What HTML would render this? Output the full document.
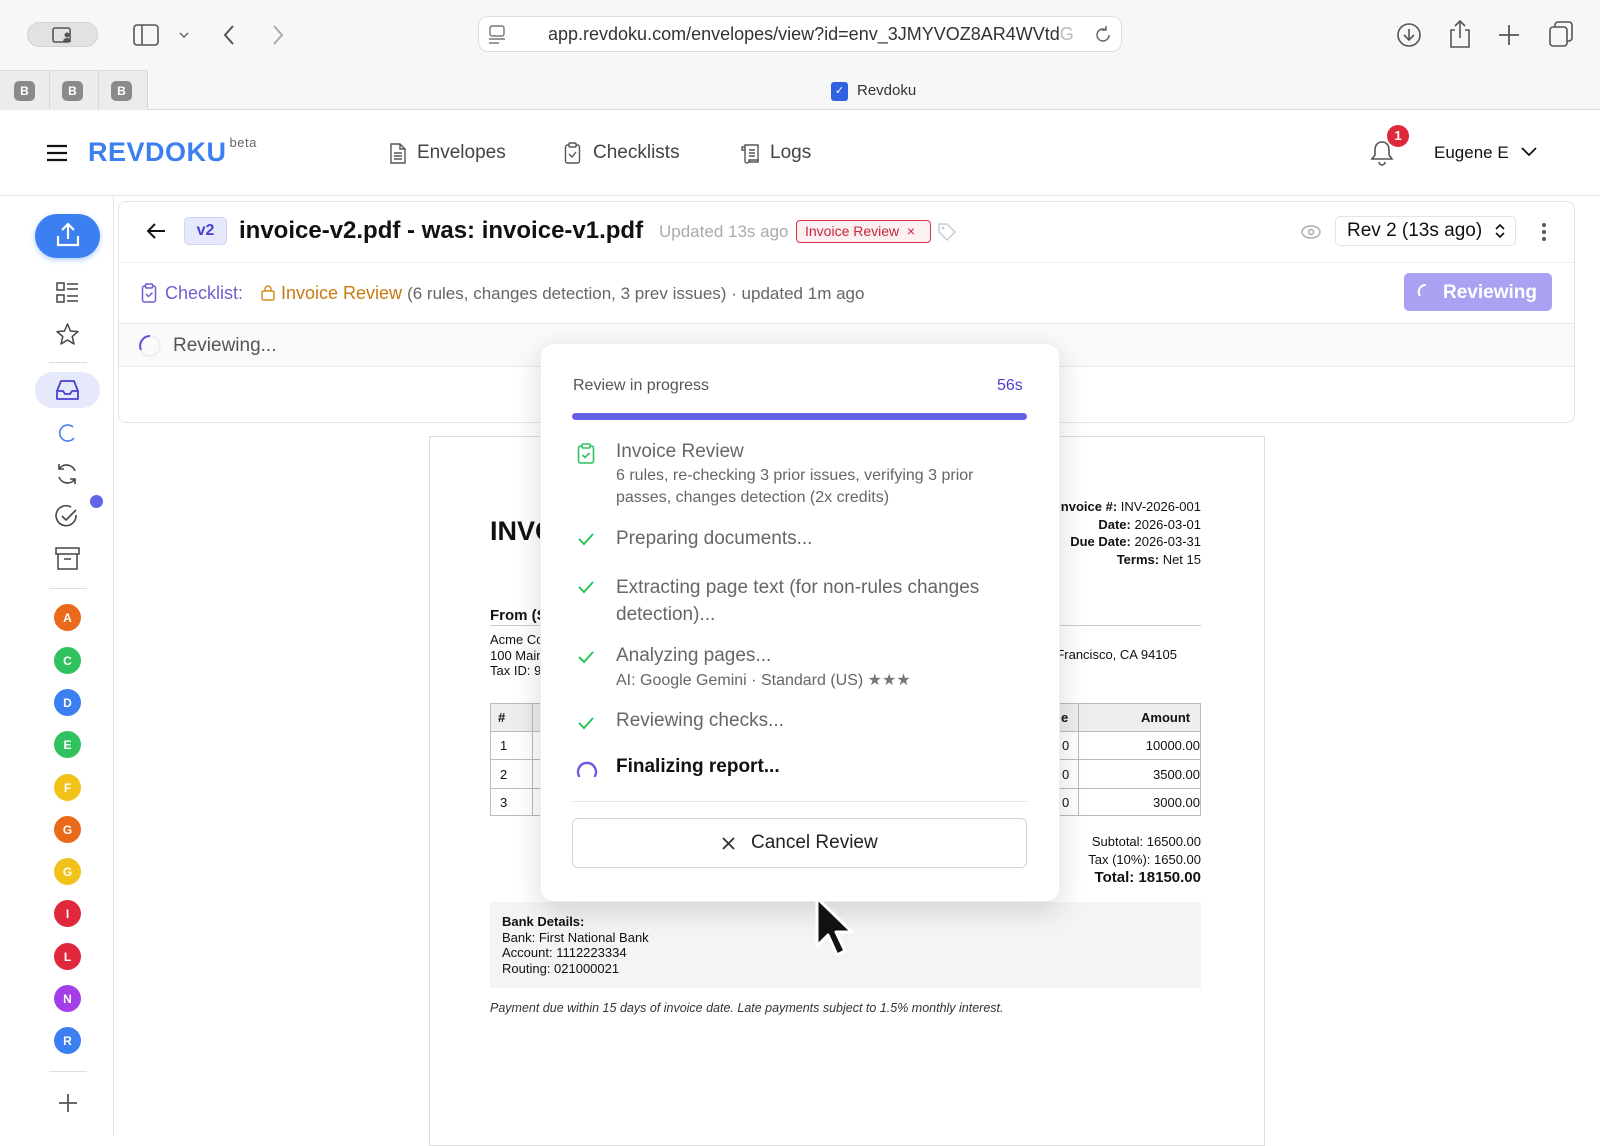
<!DOCTYPE html>
<html><head><meta charset="utf-8"><style>
*{box-sizing:border-box;margin:0;padding:0}
body{width:1600px;height:1136px;overflow:hidden;background:#fff;font-family:"Liberation Sans",sans-serif;position:relative;color:#111}
.a{position:absolute}
.c{transform:translate(-50%,-50%)}
.t{white-space:nowrap}
svg{display:block}
.av{position:absolute;left:54px;width:27px;height:27px;border-radius:50%;color:#fff;font-size:12px;font-weight:bold;display:flex;align-items:center;justify-content:center}
.chk{position:absolute;left:577px}
.r{text-align:right}
</style></head><body>
<!-- browser chrome -->
<div class="a" style="left:0;top:0;width:1600px;height:110px;background:#f7f7f7;border-bottom:1px solid #ddd"></div>
<div class="a" style="left:27px;top:22px;width:71px;height:25px;border-radius:13px;background:#e2e2e2;border:1px solid #d2d2d2"></div>
<svg class="a" style="left:52px;top:27px" width="22" height="16" viewBox="0 0 22 16"><rect x="1" y="1" width="17" height="14" rx="2" fill="none" stroke="#555" stroke-width="1.6"/><circle cx="15" cy="8" r="2.5" fill="#555"/><path d="M11 15c0-3 2-4 4-4s4 1 4 4z" fill="#555"/></svg>
<svg class="a" style="left:133px;top:24px" width="26" height="22" viewBox="0 0 26 22"><rect x="1" y="1" width="24" height="20" rx="3" fill="none" stroke="#555" stroke-width="1.6"/><path d="M9 1v20" stroke="#555" stroke-width="1.6"/></svg>
<svg class="a" style="left:178px;top:31px" width="12" height="8"><path d="M2 2l4 4 4-4" stroke="#666" stroke-width="1.5" fill="none"/></svg>
<svg class="a" style="left:222px;top:24px" width="14" height="22"><path d="M11 2L3 11l8 9" stroke="#555" stroke-width="2" fill="none"/></svg>
<svg class="a" style="left:271px;top:24px" width="14" height="22"><path d="M3 2l8 9-8 9" stroke="#aaa" stroke-width="2" fill="none"/></svg>
<div class="a" style="left:478px;top:16px;width:644px;height:36px;border-radius:10px;background:#fff;border:1px solid #ddd"></div>
<svg class="a" style="left:488px;top:25px" width="18" height="20"><rect x="2" y="1" width="14" height="10" rx="2" fill="none" stroke="#777" stroke-width="1.4"/><path d="M1 14h16M1 18h10" stroke="#777" stroke-width="1.4"/></svg>
<div class="a t" style="left:548px;top:24px;font-size:18px;color:#333">app.revdoku.com/envelopes/view?id=env_3JMYVOZ8AR4WVtd<span style="color:#bbb">G</span></div>
<svg class="a" style="left:1095px;top:25px" width="18" height="20"><path d="M14 10a6 6 0 1 1-3-5.2M11 1v4h-4" stroke="#666" stroke-width="1.5" fill="none"/></svg>
<svg class="a" style="left:1396px;top:22px" width="26" height="26"><circle cx="13" cy="13" r="11" stroke="#555" stroke-width="1.6" fill="none"/><path d="M13 7v11M8 13l5 5 5-5" stroke="#555" stroke-width="1.6" fill="none"/></svg>
<svg class="a" style="left:1449px;top:19px" width="22" height="30"><path d="M6 11H2v17h18V11h-4M11 19V2M6 7l5-5 5 5" stroke="#555" stroke-width="1.6" fill="none"/></svg>
<svg class="a" style="left:1498px;top:24px" width="22" height="22"><path d="M11 1v20M1 11h20" stroke="#555" stroke-width="1.8"/></svg>
<svg class="a" style="left:1548px;top:21px" width="26" height="27"><rect x="7" y="1" width="17" height="19" rx="3" fill="none" stroke="#555" stroke-width="1.6"/><rect x="2" y="6" width="17" height="19" rx="3" fill="#f7f7f7" stroke="#555" stroke-width="1.6"/></svg>
<div class="a" style="left:0;top:70px;width:147px;height:40px;background:#ececec;border-top:1px solid #ddd"></div>
<div class="a" style="left:49px;top:70px;width:1px;height:40px;background:#d8d8d8"></div>
<div class="a" style="left:98px;top:70px;width:1px;height:40px;background:#d8d8d8"></div>
<div class="a" style="left:147px;top:70px;width:1px;height:40px;background:#d8d8d8"></div>
<div class="a" style="left:14px;top:81px;width:21px;height:20px;border-radius:5px;background:#8a8a8a;color:#fff;font-size:12px;font-weight:bold;text-align:center;line-height:20px">B</div>
<div class="a" style="left:62px;top:81px;width:21px;height:20px;border-radius:5px;background:#8a8a8a;color:#fff;font-size:12px;font-weight:bold;text-align:center;line-height:20px">B</div>
<div class="a" style="left:111px;top:81px;width:21px;height:20px;border-radius:5px;background:#8a8a8a;color:#fff;font-size:12px;font-weight:bold;text-align:center;line-height:20px">B</div>
<div class="a" style="left:831px;top:82px;width:17px;height:19px;border-radius:3px;background:#2f62e0;color:#fff;font-size:11px;text-align:center;line-height:19px">✓</div>
<div class="a t" style="left:857px;top:82px;font-size:15px;color:#333">Revdoku</div>

<!-- app header -->
<div class="a" style="left:0;top:195px;width:1600px;height:1px;background:#e5e5e5"></div>
<svg class="a" style="left:46px;top:144px" width="22" height="18"><path d="M1 2h20M1 9h20M1 16h20" stroke="#111" stroke-width="2.2"/></svg>
<div class="a t" style="left:88px;top:137px;font-size:27px;font-weight:bold;color:#3b7ff0;letter-spacing:0.5px">REVDOKU<sup style="font-size:13px;color:#666;font-weight:normal;position:relative;top:-4px;margin-left:3px">beta</sup></div>
<svg class="a" style="left:389px;top:143px" width="17" height="21"><path d="M2 1h9l5 5v14H2z M11 1v5h5 M5 10h8M5 13h8M5 16h8" stroke="#555" stroke-width="1.4" fill="none"/></svg>
<div class="a t" style="left:417px;top:142px;font-size:19px;color:#444">Envelopes</div>
<svg class="a" style="left:564px;top:142px" width="17" height="22"><rect x="1.5" y="3" width="14" height="18" rx="2" stroke="#555" stroke-width="1.4" fill="none"/><rect x="5" y="1" width="7" height="4" rx="1" stroke="#555" stroke-width="1.4" fill="#fff"/><path d="M5 12l3 3 4-5" stroke="#555" stroke-width="1.4" fill="none"/></svg>
<div class="a t" style="left:593px;top:142px;font-size:19px;color:#444">Checklists</div>
<svg class="a" style="left:741px;top:143px" width="20" height="21"><path d="M4 4V2h13v17H7 M4 4H1v3h3 M4 4v14a2 2 0 0 0 4 0v-1H18 M8 7h6M8 10h6M8 13h6" stroke="#555" stroke-width="1.4" fill="none"/></svg>
<div class="a t" style="left:770px;top:142px;font-size:19px;color:#444">Logs</div>
<svg class="a" style="left:1369px;top:139px" width="26" height="28"><path d="M13 3c-5 0-7 4-7 8v5l-3 4h20l-3-4v-5c0-4-2-8-7-8z M10 23a3 3 0 0 0 6 0" stroke="#555" stroke-width="1.6" fill="none"/></svg>
<div class="a" style="left:1387px;top:125px;width:22px;height:22px;border-radius:50%;background:#e0283c;color:#fff;font-size:13px;font-weight:bold;text-align:center;line-height:22px">1</div>
<div class="a t" style="left:1434px;top:143px;font-size:17px;color:#111">Eugene E</div>
<svg class="a" style="left:1520px;top:146px" width="18" height="12"><path d="M2 2l7 7 7-7" stroke="#111" stroke-width="1.8" fill="none"/></svg>

<!-- sidebar -->
<div class="a" style="left:113px;top:196px;width:1px;height:940px;background:#e5e5e5"></div>
<div class="a" style="left:35px;top:214px;width:65px;height:44px;border-radius:22px;background:#3b7ff0;box-shadow:0 2px 6px rgba(59,127,240,.4)"></div>
<svg class="a" style="left:56px;top:222px" width="24" height="26"><path d="M12 17V3M6 8l6-6 6 6M2 14v9h20v-9" stroke="#fff" stroke-width="2.2" fill="none"/></svg>
<svg class="a" style="left:56px;top:282px" width="23" height="22"><rect x="1" y="1" width="7" height="7" stroke="#444" stroke-width="1.5" fill="none"/><rect x="1" y="13" width="7" height="7" stroke="#444" stroke-width="1.5" fill="none"/><path d="M11 2h11M11 7h11M11 14h11M11 19h11" stroke="#444" stroke-width="1.5"/></svg>
<svg class="a" style="left:55px;top:322px" width="25" height="25"><path d="M12.5 2l3 7 7.5.6-5.8 5 1.8 7.4-6.5-4-6.5 4 1.8-7.4-5.8-5L9.5 9z" stroke="#444" stroke-width="1.5" fill="none" stroke-linejoin="round"/></svg>
<div class="a" style="left:49px;top:362px;width:38px;height:1px;background:#ddd"></div>
<div class="a" style="left:35px;top:372px;width:65px;height:36px;border-radius:18px;background:#e6e8fb"></div>
<svg class="a" style="left:55px;top:379px" width="25" height="22"><path d="M2 12l4-10h13l4 10v8H2z M2 12h6l2 3h5l2-3h6" stroke="#4a3fd0" stroke-width="1.8" fill="none" stroke-linejoin="round"/></svg>
<svg class="a" style="left:57px;top:423px" width="20" height="20"><path d="M16 4A8 8 0 1 0 17 15" stroke="#4a7ff0" stroke-width="1.6" fill="none"/></svg>
<svg class="a" style="left:55px;top:462px" width="24" height="24"><path d="M20 9A9 9 0 0 0 4 7M4 2v5h5 M4 15a9 9 0 0 0 16 2M20 22v-5h-5" stroke="#444" stroke-width="1.6" fill="none"/></svg>
<svg class="a" style="left:54px;top:504px" width="26" height="26"><path d="M22 11a10 10 0 1 1-5-8" stroke="#444" stroke-width="1.6" fill="none"/><path d="M8 12l4 4 10-10" stroke="#444" stroke-width="1.6" fill="none"/></svg>
<div class="a" style="left:90px;top:495px;width:13px;height:13px;border-radius:50%;background:#6463e8"></div>
<svg class="a" style="left:55px;top:547px" width="25" height="23"><rect x="1" y="1" width="23" height="6" stroke="#444" stroke-width="1.5" fill="none"/><path d="M3 7v15h19V7 M9 12h7" stroke="#444" stroke-width="1.5" fill="none"/></svg>
<div class="a" style="left:49px;top:588px;width:38px;height:1px;background:#ddd"></div>
<div class="av" style="top:604px;background:#ea6a1b">A</div>
<div class="av" style="top:647px;background:#2fc25e">C</div>
<div class="av" style="top:689px;background:#3b7ff0">D</div>
<div class="av" style="top:731px;background:#2fc25e">E</div>
<div class="av" style="top:774px;background:#f2c21b">F</div>
<div class="av" style="top:816px;background:#ea6a1b">G</div>
<div class="av" style="top:858px;background:#f2c21b">G</div>
<div class="av" style="top:900px;background:#e0283c">I</div>
<div class="av" style="top:943px;background:#e0283c">L</div>
<div class="av" style="top:985px;background:#a43fe8">N</div>
<div class="av" style="top:1027px;background:#3b7ff0">R</div>
<div class="a" style="left:49px;top:1071px;width:38px;height:1px;background:#ddd"></div>
<svg class="a" style="left:58px;top:1093px" width="20" height="20"><path d="M10 1v18M1 10h18" stroke="#555" stroke-width="1.8"/></svg>

<!-- main card -->
<div class="a" style="left:118px;top:201px;width:1457px;height:222px;border:1px solid #e5e5e5;border-radius:8px;background:#fff"></div>
<svg class="a" style="left:146px;top:222px" width="20" height="18"><path d="M19 9H2M9 2L2 9l7 7" stroke="#111" stroke-width="2" fill="none"/></svg>
<div class="a" style="left:184px;top:217px;width:43px;height:28px;border-radius:5px;background:#e6e8fb;border:1px solid #cfd3f5;color:#4a3fd0;font-size:16px;font-weight:bold;text-align:center;line-height:26px">v2</div>
<div class="a t" style="left:239px;top:217px;font-size:24px;font-weight:bold;color:#111">invoice-v2.pdf - was: invoice-v1.pdf</div>
<div class="a t" style="left:659px;top:222px;font-size:17px;color:#aaa">Updated 13s ago</div>
<div class="a t" style="left:796px;top:220px;width:135px;height:23px;border:1.5px solid #d9334a;border-radius:4px;background:#fdf0f2;color:#c9253d;font-size:14px;line-height:20px;padding-left:8px">Invoice Review &nbsp;×</div>
<svg class="a" style="left:937px;top:222px" width="20" height="20"><path d="M2 2h8l8 8-8 8-8-8z" stroke="#ccc" stroke-width="1.5" fill="none" stroke-linejoin="round"/><circle cx="6" cy="6" r="1.4" fill="#ccc"/></svg>
<svg class="a" style="left:1301px;top:224px" width="20" height="16"><ellipse cx="10" cy="8" rx="9" ry="6" stroke="#aaa" stroke-width="1.4" fill="none"/><circle cx="10" cy="8" r="2.5" stroke="#aaa" stroke-width="1.4" fill="none"/></svg>
<div class="a" style="left:1335px;top:216px;width:181px;height:30px;border:1px solid #e3e3e3;border-radius:5px"></div>
<div class="a t" style="left:1347px;top:220px;font-size:19px;color:#111">Rev 2 (13s ago)</div>
<svg class="a" style="left:1494px;top:222px" width="12" height="18"><path d="M2 7l4-4 4 4M2 11l4 4 4-4" stroke="#111" stroke-width="1.6" fill="none"/></svg>
<svg class="a" style="left:1541px;top:222px" width="6" height="20"><circle cx="3" cy="3" r="2" fill="#555"/><circle cx="3" cy="10" r="2" fill="#555"/><circle cx="3" cy="17" r="2" fill="#555"/></svg>
<div class="a" style="left:119px;top:262px;width:1455px;height:1px;background:#eee"></div>
<svg class="a" style="left:141px;top:283px" width="16" height="20"><rect x="1.5" y="3" width="13" height="16" rx="2" stroke="#6d5fd0" stroke-width="1.5" fill="none"/><rect x="4.5" y="1" width="7" height="4" rx="1" stroke="#6d5fd0" stroke-width="1.5" fill="#fff"/><path d="M5 11l2.5 2.5 4-4" stroke="#6d5fd0" stroke-width="1.5" fill="none"/></svg>
<div class="a t" style="left:165px;top:283px;font-size:18px;color:#6d5fd0">Checklist:</div>
<svg class="a" style="left:261px;top:284px" width="14" height="17"><rect x="1" y="7" width="12" height="9" rx="1.5" stroke="#d58a1c" stroke-width="1.5" fill="none"/><path d="M4 7V5a3 3 0 0 1 6 0v2" stroke="#d58a1c" stroke-width="1.5" fill="none"/></svg>
<div class="a t" style="left:281px;top:283px;font-size:18px;color:#c77a10">Invoice Review <span style="color:#666;font-size:17px">(6 rules, changes detection, 3 prev issues) · updated 1m ago</span></div>
<div class="a" style="left:1404px;top:273px;width:148px;height:38px;border-radius:5px;background:#a9a1f2"></div>
<svg class="a" style="left:1417px;top:283px" width="18" height="18"><path d="M9 2A7 7 0 0 0 3 13" stroke="#fff" stroke-width="2" fill="none"/></svg>
<div class="a t" style="left:1443px;top:282px;font-size:19px;color:#fff;font-weight:bold">Reviewing</div>
<div class="a" style="left:119px;top:323px;width:1455px;height:44px;background:#fafafa;border-top:1px solid #e8e8e8;border-bottom:1px solid #e8e8e8"></div>
<svg class="a" style="left:138px;top:334px" width="24" height="24"><circle cx="12" cy="12" r="10" stroke="#eee" stroke-width="2" fill="none"/><path d="M12 2A10 10 0 0 0 3 16" stroke="#5b56d8" stroke-width="2" fill="none"/></svg>
<div class="a t" style="left:173px;top:335px;font-size:19px;color:#555">Reviewing...</div>

<!-- document page -->
<div class="a" style="left:429px;top:436px;width:836px;height:710px;border:1px solid #ddd;background:#fff"></div>
<div class="a t" style="left:490px;top:516px;font-size:27px;font-weight:bold;color:#111">INVOICE</div>
<div class="a r" style="right:399px;top:498px;font-size:13px;line-height:17.5px;color:#111;width:300px"><b>Invoice #:</b> INV-2026-001<br><b>Date:</b> 2026-03-01<br><b>Due Date:</b> 2026-03-31<br><b>Terms:</b> Net 15</div>
<div class="a t" style="left:490px;top:607px;font-size:15px;font-weight:bold">From (Sender)</div>
<div class="a" style="left:490px;top:625px;width:711px;height:1px;background:#ccc"></div>
<div class="a t" style="left:490px;top:632px;font-size:13px;line-height:15.5px">Acme Corp<br>100 Main St<br>Tax ID: 98-7654321</div>
<div class="a t r" style="right:423px;top:647px;font-size:13px">San Francisco, CA 94105</div>
<div class="a" style="left:490px;top:703px;width:711px;height:113px;border:1px solid #bbb"></div>
<div class="a" style="left:491px;top:704px;width:709px;height:27px;background:#eee"></div>
<div class="a" style="left:490px;top:731px;width:711px;height:1px;background:#bbb"></div>
<div class="a" style="left:490px;top:759px;width:711px;height:1px;background:#bbb"></div>
<div class="a" style="left:490px;top:788px;width:711px;height:1px;background:#bbb"></div>
<div class="a" style="left:532px;top:703px;width:1px;height:113px;background:#bbb"></div>
<div class="a" style="left:1078px;top:703px;width:1px;height:113px;background:#bbb"></div>
<div class="a t" style="left:498px;top:710px;font-size:13px;font-weight:bold">#</div>
<div class="a t" style="left:1141px;top:710px;font-size:13px;font-weight:bold">Amount</div>
<div class="a t" style="left:1061px;top:710px;font-size:13px;font-weight:bold">e</div>
<div class="a t" style="left:500px;top:738px;font-size:13px">1</div>
<div class="a t" style="left:500px;top:767px;font-size:13px">2</div>
<div class="a t" style="left:500px;top:795px;font-size:13px">3</div>
<div class="a t" style="left:1062px;top:738px;font-size:13px">0</div>
<div class="a t" style="left:1062px;top:767px;font-size:13px">0</div>
<div class="a t" style="left:1062px;top:795px;font-size:13px">0</div>
<div class="a t r" style="right:400px;top:738px;font-size:13px">10000.00</div>
<div class="a t r" style="right:400px;top:767px;font-size:13px">3500.00</div>
<div class="a t r" style="right:400px;top:795px;font-size:13px">3000.00</div>
<div class="a r" style="right:399px;top:833px;font-size:13px;line-height:18px">Subtotal: 16500.00<br>Tax (10%): 1650.00<br><b style="font-size:15px">Total: 18150.00</b></div>
<div class="a" style="left:490px;top:902px;width:711px;height:86px;background:#f4f4f6"></div>
<div class="a t" style="left:502px;top:914px;font-size:13px;line-height:15.5px"><b>Bank Details:</b><br>Bank: First National Bank<br>Account: 1112223334<br>Routing: 021000021</div>
<div class="a t" style="left:490px;top:1001px;font-size:12.5px;font-style:italic;color:#333">Payment due within 15 days of invoice date. Late payments subject to 1.5% monthly interest.</div>

<!-- modal -->
<div class="a" style="left:540px;top:343px;width:520px;height:559px;border-radius:14px;background:#fff;border:1px solid #eee;box-shadow:0 8px 30px rgba(0,0,0,.15)"></div>
<div class="a t" style="left:573px;top:377px;font-size:16px;color:#555">Review in progress</div>
<div class="a t" style="left:997px;top:377px;font-size:16px;color:#4a3fd0">56s</div>
<div class="a" style="left:572px;top:413px;width:455px;height:7px;border-radius:4px;background:#6461e6"></div>
<svg class="a" style="left:577px;top:443px" width="18" height="21"><rect x="1.5" y="3" width="15" height="17" rx="2" stroke="#2fc25e" stroke-width="1.6" fill="none"/><rect x="5" y="1" width="8" height="4" rx="1" stroke="#2fc25e" stroke-width="1.6" fill="#fff"/><path d="M5.5 12l2.5 2.5 4.5-4.5" stroke="#2fc25e" stroke-width="1.6" fill="none"/></svg>
<div class="a t" style="left:616px;top:441px;font-size:19px;color:#666">Invoice Review</div>
<div class="a" style="left:616px;top:465px;font-size:16px;line-height:22px;color:#666;width:410px">6 rules, re-checking 3 prior issues, verifying 3 prior passes, changes detection (2x credits)</div>
<svg class="chk" style="top:532px" width="18" height="14"><path d="M2 7l5 5 9-10" stroke="#2fc25e" stroke-width="2" fill="none"/></svg>
<div class="a t" style="left:616px;top:528px;font-size:19px;color:#666">Preparing documents...</div>
<svg class="chk" style="top:580px" width="18" height="14"><path d="M2 7l5 5 9-10" stroke="#2fc25e" stroke-width="2" fill="none"/></svg>
<div class="a" style="left:616px;top:574px;font-size:19px;line-height:27px;color:#666;width:400px">Extracting page text (for non-rules changes detection)...</div>
<svg class="chk" style="top:650px" width="18" height="14"><path d="M2 7l5 5 9-10" stroke="#2fc25e" stroke-width="2" fill="none"/></svg>
<div class="a t" style="left:616px;top:645px;font-size:19px;color:#666">Analyzing pages...</div>
<div class="a t" style="left:616px;top:670px;font-size:16px;color:#666">AI: Google Gemini · Standard (US) <span style="color:#777">★★★</span></div>
<svg class="chk" style="top:716px" width="18" height="14"><path d="M2 7l5 5 9-10" stroke="#2fc25e" stroke-width="2" fill="none"/></svg>
<div class="a t" style="left:616px;top:710px;font-size:19px;color:#666">Reviewing checks...</div>
<svg class="a" style="left:575px;top:756px" width="24" height="24"><path d="M4 20A9 9 0 1 1 20 20" stroke="#6a5ce0" stroke-width="2.4" fill="none" stroke-linecap="round"/></svg>
<div class="a t" style="left:616px;top:756px;font-size:19px;color:#111;font-weight:bold">Finalizing report...</div>
<div class="a" style="left:572px;top:801px;width:455px;height:1px;background:#e5e5e5"></div>
<div class="a" style="left:572px;top:818px;width:455px;height:50px;border:1px solid #d5d5d5;border-radius:6px"></div>
<svg class="a" style="left:721px;top:836px" width="15" height="15"><path d="M2 2l11 11M13 2L2 13" stroke="#333" stroke-width="1.8"/></svg>
<div class="a t" style="left:751px;top:832px;font-size:19px;color:#222">Cancel Review</div>
<!-- cursor -->
<svg class="a" style="left:814px;top:896px" width="40" height="62"><path d="M3 2v48l11-11 9 20 8-4-9-19h16z" fill="#111" stroke="#fff" stroke-width="3" stroke-linejoin="round"/></svg>
</body></html>
